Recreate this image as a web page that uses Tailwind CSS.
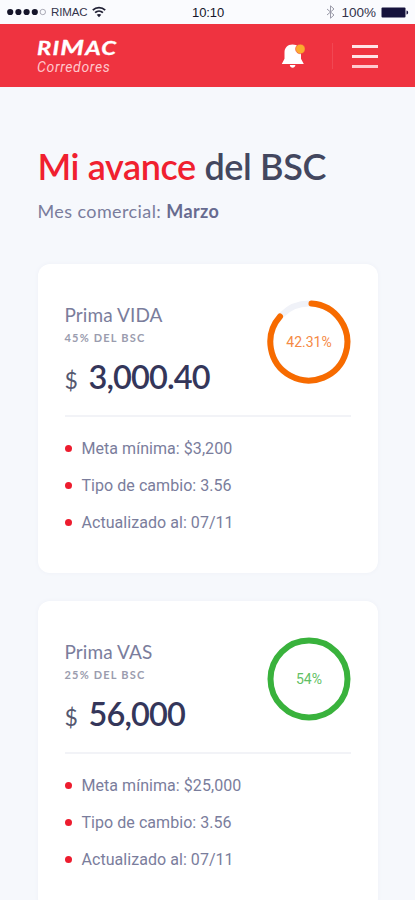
<!DOCTYPE html>
<html lang="es">
<head>
    <meta charset="UTF-8">
    <meta name="viewport" content="width=device-width, initial-scale=1.0">
    <title>RIMAC Corredores</title>
    <script src="https://cdn.jsdelivr.net/npm/@tailwindcss/browser@4"></script>
</head>
<body class="h-[900px] overflow-hidden bg-[#f6f8fc] font-['Lato',sans-serif] text-[#7a7d9c]">
    <!-- Status bar -->
    <div class="flex h-6 items-center bg-[#fafbfe] pl-[7px] pr-[6px] pt-px font-['Liberation_Sans',sans-serif] text-xs text-[#33334a]">
        <div class="flex w-[185px] items-center">
            <svg class="h-2 w-10" viewBox="0 0 40 8" fill="#15152a">
                <circle cx="3.2" cy="4" r="3.1" />
                <circle cx="11.4" cy="4" r="3.1" />
                <circle cx="19.6" cy="4" r="3.1" />
                <circle cx="27.8" cy="4" r="3.1" />
                <circle cx="35.8" cy="4" r="2.7" fill="none" stroke="#8a8a98" stroke-width=".7" />
            </svg>
            <span class="ml-[4px] w-[38px] text-[11.5px] tracking-[-0.1px]">RIMAC</span>
            <svg class="ml-[3px] h-3 w-[14px]" viewBox="0 0 14 12" fill="none" stroke="#202034" stroke-width="1.8">
                <path d="M.8 4.2C4.3.8 9.7.8 13.2 4.2M3.1 6.7c2.2-2.1 5.6-2.1 7.8 0" />
                <path d="M7 11.2 4.7 8.7c1.3-1.1 3.3-1.1 4.6 0z" fill="#202034" stroke="none" />
            </svg>
        </div>
        <span class="text-[13px] tracking-[-0.1px] text-[#15152a]">10:10</span>
        <div class="ml-auto flex items-center">
            <svg class="h-[14px] w-[9px]" viewBox="0 0 9 14" fill="none" stroke="#9a9aa8" stroke-width="1">
                <path d="m1 4 7 6-3.5 3.2V.8L8 4l-7 6" />
            </svg>
            <span class="ml-[6px] text-[13.5px]">100%</span>
            <svg class="ml-[5px] h-[11px] w-7" viewBox="0 0 28 11" fill="#15123c">
                <rect x=".5" y=".5" width="24" height="10" rx="1" />
                <path d="M25.5 3.5c2.2.5 2.2 3.5 0 4z" />
            </svg>
        </div>
    </div>

    <!-- Header -->
    <header class="flex h-[63px] items-center justify-between bg-[#ef3340] pl-[37px] pr-[37px] text-white">
        <div class="pt-px">
            <div class="flex h-[18px] origin-left scale-x-[1.32] items-baseline text-[18px] leading-[20px] font-bold tracking-[0.9px] italic [-webkit-text-stroke:0.3px]">
                <span>RI</span><span class="text-[20.5px]">M</span><span>AC</span>
            </div>
            <div class="mt-[3px] font-['Roboto',sans-serif] text-[14px] leading-[18px] tracking-[0.65px] text-[#ffc6cb] italic">Corredores</div>
        </div>
        <div class="flex items-center">
            <svg class="h-[26px] w-6" viewBox="0 0 24 26">
                <path d="M11.5 1.5c-5 0-8 3.4-8 8v6.3L.8 21h22L20 15.8V9.5c0-4.6-3.5-8-8.5-8z" fill="#fff" />
                <path d="M8.8 22h5.6c-.4 3.6-5.2 3.6-5.6 0z" fill="#fff" />
                <circle cx="19.3" cy="6" r="4.8" fill="#fbab2f" stroke="#ef3340" stroke-width=".5" />
            </svg>
            <div class="ml-[27px] h-[26px] w-px bg-white/10"></div>
            <div class="ml-[19px] flex w-[26px] flex-col gap-[7px] pt-px">
                <div class="h-[3px] bg-[#ffe3e6]"></div>
                <div class="h-[3px] bg-[#ffe3e6]"></div>
                <div class="h-[3px] bg-[#ffc9ce]"></div>
            </div>
        </div>
    </header>

    <main class="px-[37.5px] pt-[57px]">
        <h1 class="text-[36px] leading-11 font-semibold tracking-[-0.38px] whitespace-nowrap text-[#43475f]"><span class="text-[#f0202f]">Mi avance</span> del BSC</h1>
        <p class="mt-[11px] text-[18px] leading-6 tracking-[0.4px]">Mes comercial: <b class="text-[#676b90]">Marzo</b></p>

        <!-- Prima VIDA -->
        <section class="mt-[41px] h-[309px] rounded-xl bg-white px-[27px] pt-[36px] shadow-[0_0_4px_#edf0f7]">
            <div class="flex h-[117px] justify-between border-b-2 border-[#f2f3f7]">
                <div class="pt-[3px]">
                    <h2 class="text-[19px] leading-6 tracking-[0.1px]">Prima VIDA</h2>
                    <p class="mt-[3px] text-[11px] leading-4 font-bold tracking-[1.2px] text-[#9a9cae]">45% DEL BSC</p>
                    <p class="mt-[11px] flex items-baseline leading-10 text-[#34365a]"><span class="w-6 pb-px text-[23px] text-[#55586f]">$</span><span class="text-[32.5px] font-semibold tracking-[-0.9px]">3,000.40</span></p>
                </div>
                <div class="relative size-[84px]">
                    <svg class="size-full" viewBox="0 0 84 84" fill="none" stroke-width="6">
                        <circle cx="42" cy="42" r="38.5" stroke="#f0f2f8" />
                        <path d="M44.5 3.6A38.5 38.5 0 1 1 13 16.5" stroke="#f76b00" stroke-linecap="round" />
                    </svg>
                    <span class="absolute inset-0 flex items-center justify-center pl-px font-['Roboto',sans-serif] text-[14px] text-[#f58a45]">42.31%</span>
                </div>
            </div>
            <ul class="flex flex-col gap-[13px] pt-[20px] font-['Roboto',sans-serif] text-[16px] leading-6 tracking-[0.05px]">
                <li class="flex items-center gap-[10px]"><i class="mb-[2px] size-[7px] rounded-full bg-[#ed1c2e]"></i>Meta mínima: $3,200</li>
                <li class="flex items-center gap-[10px]"><i class="mb-[2px] size-[7px] rounded-full bg-[#ed1c2e]"></i>Tipo de cambio: 3.56</li>
                <li class="flex items-center gap-[10px]"><i class="mb-[2px] size-[7px] rounded-full bg-[#ed1c2e]"></i>Actualizado al: 07/11</li>
            </ul>
        </section>

        <!-- Prima VAS -->
        <section class="mt-[28px] h-[309px] rounded-xl bg-white px-[27px] pt-[36px] shadow-[0_0_4px_#edf0f7]">
            <div class="flex h-[117px] justify-between border-b-2 border-[#f2f3f7]">
                <div class="pt-[3px]">
                    <h2 class="text-[19px] leading-6 tracking-[0.1px]">Prima VAS</h2>
                    <p class="mt-[3px] text-[11px] leading-4 font-bold tracking-[1.2px] text-[#9a9cae]">25% DEL BSC</p>
                    <p class="mt-[11px] flex items-baseline leading-10 text-[#34365a]"><span class="w-6 pb-px text-[23px] text-[#55586f]">$</span><span class="text-[32.5px] font-semibold tracking-[-0.9px]">56,000</span></p>
                </div>
                <div class="relative size-[84px]">
                    <svg class="size-full" viewBox="0 0 84 84" fill="none" stroke-width="6">
                        <circle cx="42" cy="42" r="38.5" stroke="#39b23c" />
                    </svg>
                    <span class="absolute inset-0 flex items-center justify-center pl-px font-['Roboto',sans-serif] text-[14px] text-[#62bf65]">54%</span>
                </div>
            </div>
            <ul class="flex flex-col gap-[13px] pt-[20px] font-['Roboto',sans-serif] text-[16px] leading-6 tracking-[0.05px]">
                <li class="flex items-center gap-[10px]"><i class="mb-[2px] size-[7px] rounded-full bg-[#ed1c2e]"></i>Meta mínima: $25,000</li>
                <li class="flex items-center gap-[10px]"><i class="mb-[2px] size-[7px] rounded-full bg-[#ed1c2e]"></i>Tipo de cambio: 3.56</li>
                <li class="flex items-center gap-[10px]"><i class="mb-[2px] size-[7px] rounded-full bg-[#ed1c2e]"></i>Actualizado al: 07/11</li>
            </ul>
        </section>
    </main>
</body>
</html>
